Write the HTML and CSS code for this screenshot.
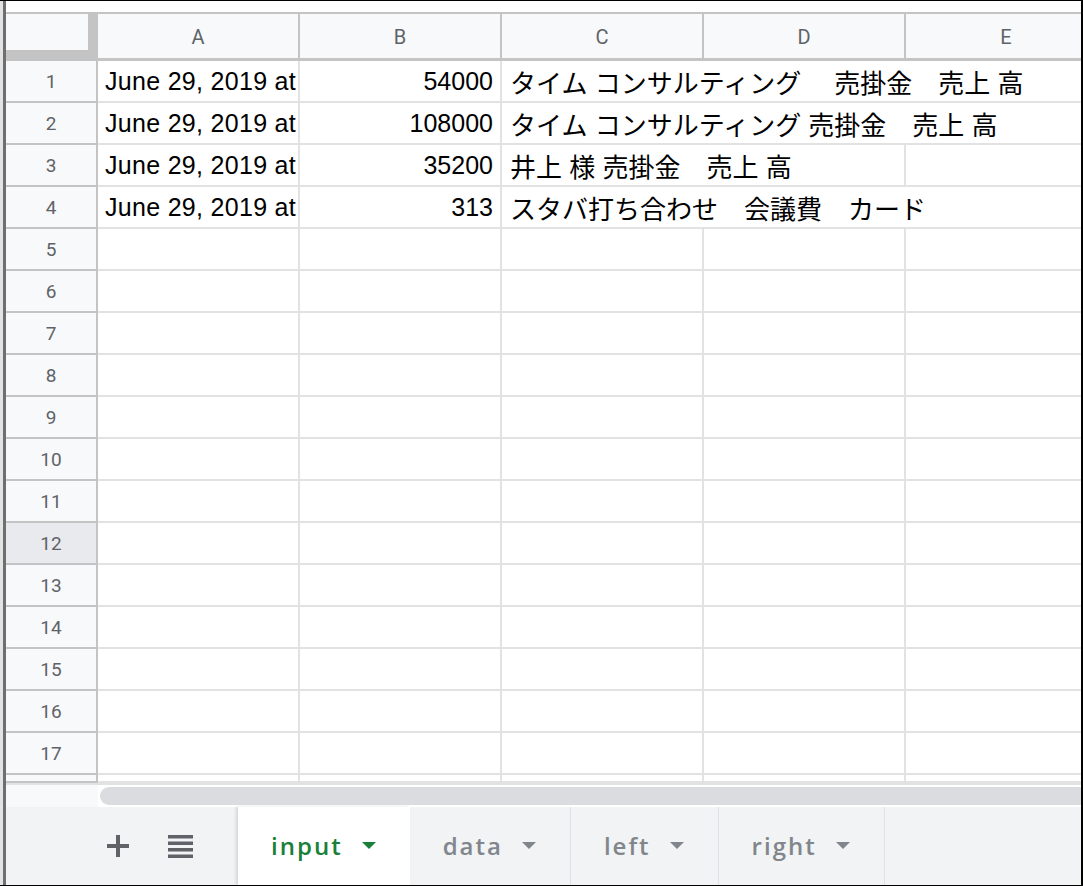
FILE: index.html
```html
<!DOCTYPE html>
<html lang="ja">
<head>
  <meta charset="UTF-8">
  <meta name="viewport" content="width=device-width, initial-scale=1.0">
  <title>Sheet - input</title>
  <link rel="stylesheet" href="styles.css">
</head>
<body>
  <div class="window">
    <div class="edge"></div>
    <div class="sheet">
      <div class="formula-strip"></div>

      <div class="grid">
        <!-- column headers -->
        <div class="corner"></div>
        <div class="colhead">A</div>
        <div class="colhead">B</div>
        <div class="colhead">C</div>
        <div class="colhead">D</div>
        <div class="colhead">E</div>

        <!-- data rows -->
        <div class="rowhead">1</div>
        <div class="cell">June 29, 2019 at</div>
        <div class="cell num">54000</div>
        <div class="cell ja spill-3">タイム コンサルティング　 売掛金　売上 高</div>

        <div class="rowhead">2</div>
        <div class="cell">June 29, 2019 at</div>
        <div class="cell num">108000</div>
        <div class="cell ja spill-3">タイム コンサルティング 売掛金　売上 高</div>

        <div class="rowhead">3</div>
        <div class="cell">June 29, 2019 at</div>
        <div class="cell num">35200</div>
        <div class="cell ja spill-2">井上 様 売掛金　売上 高</div>
        <div class="cell"></div>

        <div class="rowhead">4</div>
        <div class="cell">June 29, 2019 at</div>
        <div class="cell num">313</div>
        <div class="cell ja spill-3">スタバ打ち合わせ　会議費　カード</div>

        <!-- empty rows -->
        <div class="rowhead">5</div><div class="cell"></div><div class="cell"></div><div class="cell"></div><div class="cell"></div><div class="cell"></div>
        <div class="rowhead">6</div><div class="cell"></div><div class="cell"></div><div class="cell"></div><div class="cell"></div><div class="cell"></div>
        <div class="rowhead">7</div><div class="cell"></div><div class="cell"></div><div class="cell"></div><div class="cell"></div><div class="cell"></div>
        <div class="rowhead">8</div><div class="cell"></div><div class="cell"></div><div class="cell"></div><div class="cell"></div><div class="cell"></div>
        <div class="rowhead">9</div><div class="cell"></div><div class="cell"></div><div class="cell"></div><div class="cell"></div><div class="cell"></div>
        <div class="rowhead">10</div><div class="cell"></div><div class="cell"></div><div class="cell"></div><div class="cell"></div><div class="cell"></div>
        <div class="rowhead">11</div><div class="cell"></div><div class="cell"></div><div class="cell"></div><div class="cell"></div><div class="cell"></div>
        <div class="rowhead active">12</div><div class="cell"></div><div class="cell"></div><div class="cell"></div><div class="cell"></div><div class="cell"></div>
        <div class="rowhead">13</div><div class="cell"></div><div class="cell"></div><div class="cell"></div><div class="cell"></div><div class="cell"></div>
        <div class="rowhead">14</div><div class="cell"></div><div class="cell"></div><div class="cell"></div><div class="cell"></div><div class="cell"></div>
        <div class="rowhead">15</div><div class="cell"></div><div class="cell"></div><div class="cell"></div><div class="cell"></div><div class="cell"></div>
        <div class="rowhead">16</div><div class="cell"></div><div class="cell"></div><div class="cell"></div><div class="cell"></div><div class="cell"></div>
        <div class="rowhead">17</div><div class="cell"></div><div class="cell"></div><div class="cell"></div><div class="cell"></div><div class="cell"></div>
        <!-- row 18, only its top edge shows -->
        <div class="rowhead"></div><div class="cell"></div><div class="cell"></div><div class="cell"></div><div class="cell"></div><div class="cell"></div>
      </div>

      <div class="hscroll">
        <div class="hscroll-corner"></div>
        <div class="hscroll-track"><div class="thumb"></div></div>
      </div>

      <div class="tabbar">
        <div class="tab-tools">
          <button class="tool" title="Add sheet">
            <svg width="22" height="22" viewBox="0 0 22 22"><path d="M9 0h4v9h9v4h-9v9H9v-9H0V9h9z" fill="#5f6368"/></svg>
          </button>
          <button class="tool" title="All sheets">
            <svg width="25" height="23" viewBox="0 0 25 23"><path d="M0 0h25v3.5H0zM0 6.5h25V10H0zM0 13h25v3.5H0zM0 19.5h25V23H0z" fill="#5f6368"/></svg>
          </button>
        </div>
        <div class="tab selected">input <span class="caret"></span></div>
        <div class="tab">data <span class="caret"></span></div>
        <div class="tab">left <span class="caret"></span></div>
        <div class="tab">right <span class="caret"></span></div>
      </div>
    </div>
  </div>
</body>
</html>
```

FILE: styles.css
```css
* {
  box-sizing: border-box;
}
body {
  margin: 0;
  background: #fff;
  font-family: "Liberation Sans", Arial, sans-serif;
}
.window {
  display: flex;
  width: 1083px;
  height: 886px;
  border-top: 1px solid #000;
  border-right: 2px solid #000;
  border-bottom: 1px solid #000;
  overflow: hidden;
}
.edge {
  flex: 0 0 6px;
  border-left: 3px solid #e3e3e3;
  background: #6f6f6f;
}
.sheet {
  flex: 1;
  min-width: 0;
  display: flex;
  flex-direction: column;
  overflow: hidden;
}
.formula-strip {
  height: 11px;
  background: #fff;
}

/* grid */
.grid {
  display: grid;
  grid-template-columns: 92px repeat(5, 202px);
  grid-template-rows: 49px repeat(17, 42px) 8px;
  overflow: hidden;
}
.corner,
.colhead {
  background: #f8f9fa;
  border-top: 2px solid #c4c4c4;
  border-bottom: 3px solid #c4c4c4;
  border-right: 2px solid #c4c4c4;
}
.corner {
  box-shadow: inset -8px -8px 0 #c4c4c4;
}
.colhead {
  display: flex;
  align-items: center;
  justify-content: center;
  font-family: Roboto, "Liberation Sans", sans-serif;
  font-size: 20px;
  color: #5f6368;
  padding-top: 2px;
}
.rowhead {
  display: flex;
  align-items: center;
  justify-content: center;
  background: #f8f9fa;
  border-right: 2px solid #c4c4c4;
  border-bottom: 2px solid #c4c4c4;
  font-family: Roboto, "Liberation Sans", sans-serif;
  font-size: 19px;
  color: #5f6368;
}
.rowhead.active {
  background: #e8eaed;
}
.cell {
  display: flex;
  align-items: center;
  padding: 0 7px;
  border-right: 2px solid #e2e2e2;
  border-bottom: 2px solid #e2e2e2;
  font-family: "Liberation Sans", "Noto Sans CJK JP", sans-serif;
  font-size: 25px;
  letter-spacing: 0.3px;
  color: #000;
  white-space: nowrap;
  overflow: hidden;
}
.cell.num {
  justify-content: flex-end;
  letter-spacing: 0;
}
.cell.ja {
  font-size: 26px;
  letter-spacing: 0;
  padding-left: 8px;
}
.spill-2 {
  grid-column: span 2;
}
.spill-3 {
  grid-column: span 3;
}

/* horizontal scrollbar */
.hscroll {
  display: flex;
  height: 24px;
  border-top: 2px solid #e2e2e2;
}
.hscroll-corner {
  flex: 0 0 92px;
  background: #f8f9fa;
}
.hscroll-track {
  flex: 1;
  padding: 2px 0 2px 2px;
  background: #fff;
}
.thumb {
  height: 18px;
  margin-right: -20px;
  border-radius: 9px;
  background: #dadce0;
}

/* sheet tabs */
.tabbar {
  flex: 1;
  display: flex;
  background: #f1f3f4;
}
.tab-tools {
  flex: 0 0 232px;
  display: flex;
  align-items: center;
  gap: 18px;
  padding-left: 90px;
}
.tool {
  width: 44px;
  height: 44px;
  padding: 0;
  border: 0;
  background: none;
  display: flex;
  align-items: center;
  justify-content: center;
}
.tab {
  display: flex;
  align-items: center;
  gap: 19px;
  padding: 0 34px 2px 33px;
  border-right: 1px solid #dfe1e5;
  font-family: "Open Sans", Roboto, sans-serif;
  font-size: 24px;
  font-weight: 600;
  letter-spacing: 2px;
  color: #80868b;
}
.tab.selected {
  background: #fff;
  color: #188038;
  border-right: 0;
  box-shadow: -2px 0 3px rgba(0, 0, 0, 0.12);
}
.caret {
  width: 0;
  height: 0;
  border-left: 7px solid transparent;
  border-right: 7px solid transparent;
  border-top: 7px solid currentColor;
}
```
